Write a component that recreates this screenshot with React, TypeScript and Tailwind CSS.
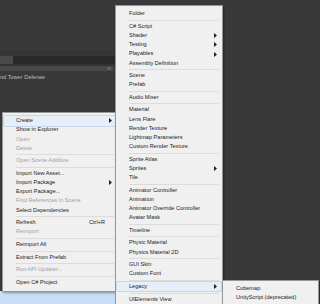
import React from "react";

type Item = {
  label?: string;
  sep?: boolean;
  off?: boolean;
  arrow?: boolean;
  key?: string;
  hl?: boolean;
};

const projectMenu: Item[] = [
  { label: "Create", arrow: true, hl: true },
  { label: "Show in Explorer" },
  { label: "Open", off: true },
  { label: "Delete", off: true },
  { sep: true },
  { label: "Open Scene Additive", off: true },
  { sep: true },
  { label: "Import New Asset..." },
  { label: "Import Package", arrow: true },
  { label: "Export Package..." },
  { label: "Find References In Scene", off: true },
  { label: "Select Dependencies" },
  { sep: true },
  { label: "Refresh", key: "Ctrl+R" },
  { label: "Reimport", off: true },
  { sep: true },
  { label: "Reimport All" },
  { sep: true },
  { label: "Extract From Prefab" },
  { sep: true },
  { label: "Run API Updater...", off: true },
  { sep: true },
  { label: "Open C# Project" },
];

const createMenu: Item[] = [
  { label: "Folder" },
  { sep: true },
  { label: "C# Script" },
  { label: "Shader", arrow: true },
  { label: "Testing", arrow: true },
  { label: "Playables", arrow: true },
  { label: "Assembly Definition" },
  { sep: true },
  { label: "Scene" },
  { label: "Prefab" },
  { sep: true },
  { label: "Audio Mixer" },
  { sep: true },
  { label: "Material" },
  { label: "Lens Flare" },
  { label: "Render Texture" },
  { label: "Lightmap Parameters" },
  { label: "Custom Render Texture" },
  { sep: true },
  { label: "Sprite Atlas" },
  { label: "Sprites", arrow: true },
  { label: "Tile" },
  { sep: true },
  { label: "Animator Controller" },
  { label: "Animation" },
  { label: "Animator Override Controller" },
  { label: "Avatar Mask" },
  { sep: true },
  { label: "Timeline" },
  { sep: true },
  { label: "Physic Material" },
  { label: "Physics Material 2D" },
  { sep: true },
  { label: "GUI Skin" },
  { label: "Custom Font" },
  { sep: true },
  { label: "Legacy", arrow: true, hl: true },
  { sep: true },
  { label: "UIElements View" },
];

const legacyMenu: Item[] = [
  { label: "Cubemap" },
  { label: "UnityScript (deprecated)" },
];

function Menu({ items, className }: { items: Item[]; className: string }) {
  return (
    <div
      className={`absolute flex flex-col bg-[#f0f0f0] border border-[#979797] py-[3.4px] px-[1px] shadow-[1px_1px_2px_rgba(0,0,0,0.35)] ${className}`}
    >
      {items.map((it, i) =>
        it.sep ? (
          <div key={i} className="h-[3.4px] flex items-center pl-[12px] pr-[2px]">
            <div className="w-full h-[1px] bg-[#dcdcdc]" />
          </div>
        ) : (
          <div
            key={i}
            className={`h-[9.2px] flex items-center pl-[12px] pr-[3px] text-[5.6px] leading-none rounded-[1px] ${
              it.hl ? "bg-[#e6eef8] outline outline-[0.5px] outline-[#c6d8ef]" : ""
            } ${it.off ? "text-[#a2a2a2]" : "text-[#1b1b1b]"}`}
          >
            <span className="flex-1 whitespace-nowrap">{it.label}</span>
            {it.key && <span className="mr-[8px]">{it.key}</span>}
            {it.arrow && (
              <svg width="3" height="5" viewBox="0 0 3 5" className="mr-[1px]">
                <path d="M0 0 L3 2.5 L0 5 Z" fill="#202020" />
              </svg>
            )}
          </div>
        )
      )}
    </div>
  );
}

export default function App() {
  return (
    <div className="relative w-[320px] h-[304px] overflow-hidden bg-[#393939] font-['Liberation_Sans',sans-serif]">
      <div className="flex flex-col w-[116px]">
        <div className="h-[50px]" />
        <div className="h-[6px] bg-[#353535]" />
        <div className="flex h-[8px] bg-[#282828]">
          <div className="w-[13px] bg-[#4a4a4a]" />
        </div>
        <div className="h-[2px] bg-[#333333]" />
        <div className="flex items-center h-[5px] bg-[#474747] mr-[3px]">
          <div className="flex-1" />
          <div className="w-[4px] h-[3px] bg-[#5d5d5d] mr-[2px]" />
        </div>
        <div className="h-[4px]" />
        <div className="text-[5.6px] leading-none text-[#bdbdbd] whitespace-nowrap">
          nd Tower Defense
        </div>
      </div>

      <div className="absolute left-0 top-[291px] w-[116px] h-[13px] bg-[#c6def6]" />

      <Menu items={projectMenu} className="left-[2px] top-[112px] w-[116px]" />
      <Menu items={createMenu} className="left-[115px] top-[5px] w-[108px]" />
      <Menu items={legacyMenu} className="left-[222px] top-[280px] w-[97px]" />
    </div>
  );
}
